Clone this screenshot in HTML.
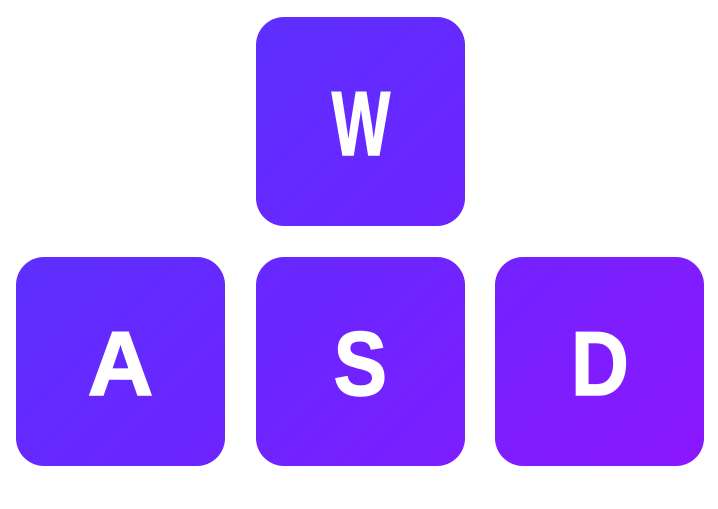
<!DOCTYPE html>
<html><head><style>
html,body{margin:0;padding:0;background:#fff;width:718px;height:509px;overflow:hidden}
.k{position:absolute;width:209px;height:209px;border-radius:28px;
background:linear-gradient(135deg,#5236ff 0%,#6a26ff 50%,#8f16ff 100%);
background-size:718px 509px;
display:flex;align-items:center;justify-content:center;
color:#fff;font-family:"Liberation Sans",sans-serif;font-weight:bold;font-size:91px;line-height:1;
-webkit-text-stroke:1.5px #fff}
.k span{display:inline-block;transform:scaleX(0.88);margin-top:5px}
</style></head><body>
<div class="k" style="left:256px;top:17px;background-position:-256px -17px"><span style="transform:scaleX(0.68)">W</span></div>
<div class="k" style="left:16px;top:257px;background-position:-16px -257px"><span style="transform:scaleX(1.0)">A</span></div>
<div class="k" style="left:256px;top:257px;background-position:-256px -257px"><span>S</span></div>
<div class="k" style="left:495px;top:257px;background-position:-495px -257px"><span>D</span></div>
</body></html>
